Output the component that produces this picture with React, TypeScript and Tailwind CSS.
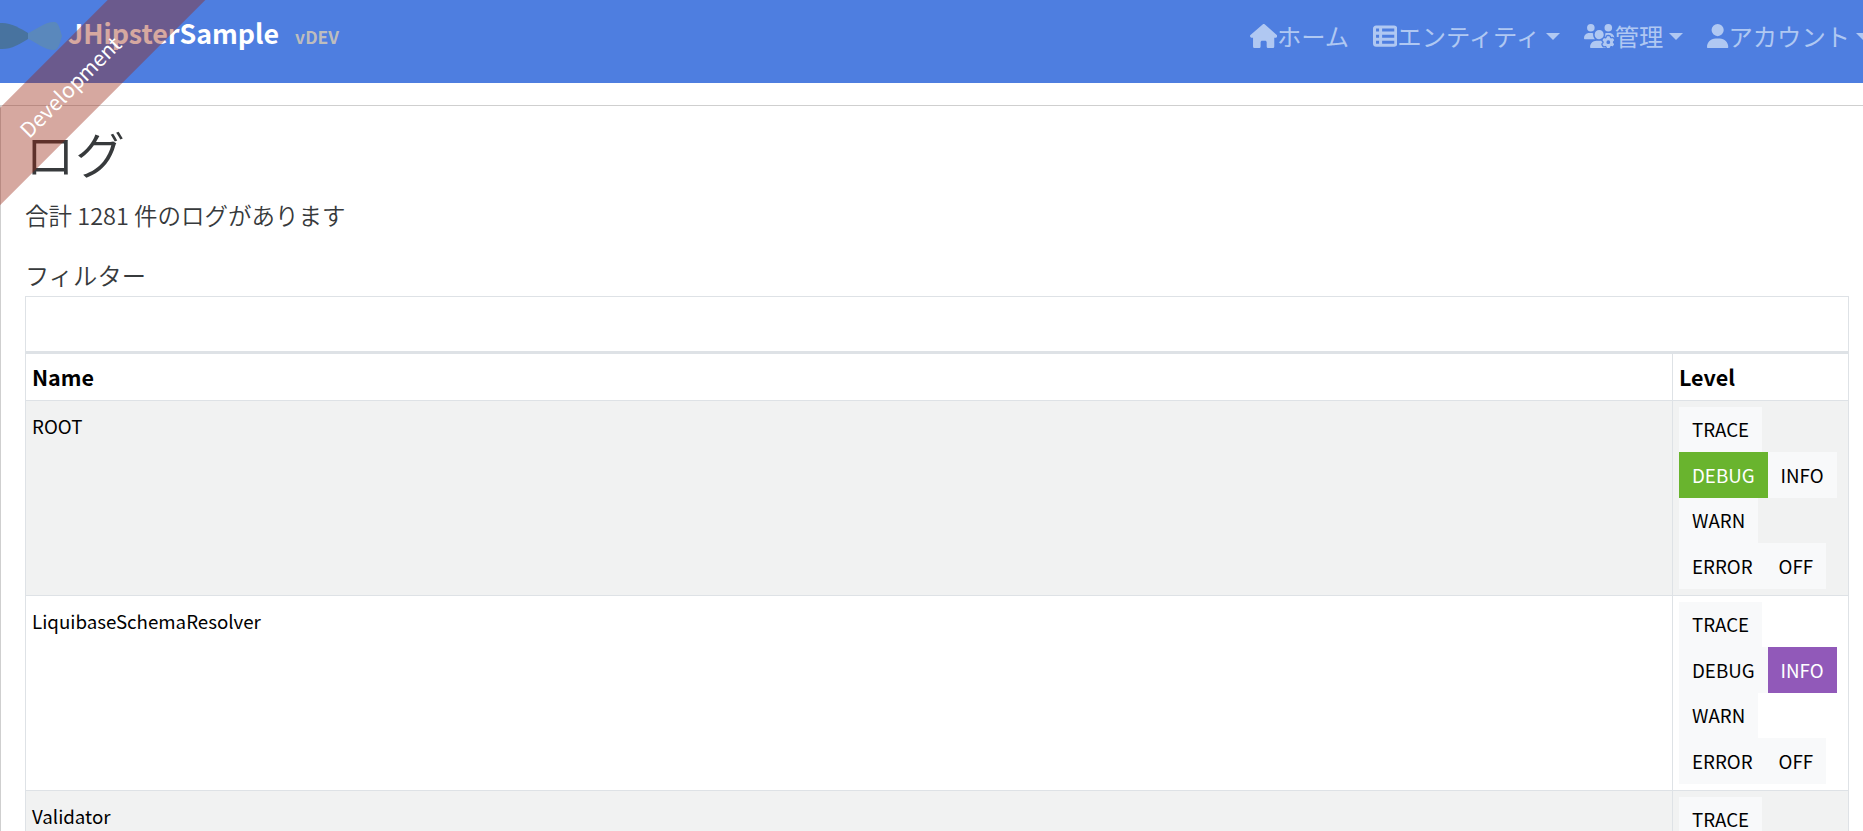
import React from 'react';
import { FaHouse, FaTableList, FaUsersGear, FaUser } from 'react-icons/fa6';

const LEVELS = ['TRACE', 'DEBUG', 'INFO', 'WARN', 'ERROR', 'OFF'];

const loggers = [
  { name: 'ROOT', level: 'DEBUG' },
  { name: 'LiquibaseSchemaResolver', level: 'INFO' },
  { name: 'Validator', level: 'INFO' },
];

const Caret = () => (
  <span className="ml-[6px] inline-block h-0 w-0 border-x-[7px] border-t-[7px] border-x-transparent border-t-current" />
);

const NavItem: React.FC<{ icon: React.ReactNode; label: string; caret?: boolean }> = ({ icon, label, caret }) => (
  <div className="flex shrink-0 items-center whitespace-nowrap">
    {icon}
    <span>{label}</span>
    {caret && <Caret />}
  </div>
);

const LevelButton: React.FC<{ level: string; active: boolean }> = ({ level, active }) => {
  let color = 'bg-[#f8f9fa] text-black';
  if (active && level === 'DEBUG') color = 'bg-[#69b42e] text-white';
  if (active && level === 'INFO') color = 'bg-[#9159b9] text-white';
  return <div className={`flex h-[45.5px] items-center px-[13px] text-[18.72px] ${color}`}>{level}</div>;
};

const App: React.FC = () => {
  return (
    <div className="relative h-screen overflow-hidden bg-white font-['Noto_Sans_CJK_JP','Noto_Sans',sans-serif]">
      {/* Development ribbon */}
      <div className="pointer-events-none absolute left-[-130px] top-[51.5px] z-50 flex h-[69px] w-[400px] -rotate-45 items-center justify-center bg-[rgba(152,37,17,0.4)] text-[21px] text-white">
        Development
      </div>

      <nav className="flex h-[83px] items-center overflow-hidden bg-[#4e7ee0]">
        <svg viewBox="0 0 62 28" className="mb-[11px] h-[28px] w-[62px] shrink-0">
          <path d="M0 1 C10 0 20 6 28 11 L28 17 C20 22 10 28 0 27 Z" fill="#48739f" />
          <path d="M28 11 C36 8 44 0 54 0 C59 0 60 8 62 14 C60 20 59 28 54 28 C44 28 36 20 28 17 Z" fill="#5a88bc" />
        </svg>
        <span className="mb-[16px] ml-[6px] shrink-0 text-[26.8px] font-bold leading-none text-white">JHipsterSample</span>
        <span className="mb-[9px] ml-[16px] shrink-0 text-[17.4px] font-bold leading-none text-[#bdbdbd]">vDEV</span>
        <div className="mb-[11px] ml-auto mr-[-7px] flex shrink-0 items-center gap-6 text-[24.3px] text-[#b0c8f2]">
          <NavItem icon={<FaHouse className="h-[24.3px] w-[27.3px]" />} label="ホーム" />
          <NavItem icon={<FaTableList className="h-[24.3px] w-[24.3px]" />} label="エンティティ" caret />
          <NavItem icon={<FaUsersGear className="h-[24.3px] w-[30.4px]" />} label="管理" caret />
          <NavItem icon={<FaUser className="h-[24.3px] w-[21.3px]" />} label="アカウント" caret />
        </div>
      </nav>

      <main className="mt-[22px] min-h-full border-l border-t border-[#cfcfcf] pl-[24px] pr-[14px] text-[#373a3c]">
        <h2 className="pt-[16px] text-[50px] font-[350] leading-[60px]">ログ</h2>
        <p className="mt-[16px] text-[23.5px] font-[350] leading-[35px]">合計 1281 件のログがあります</p>
        <p className="mt-[24px] pb-[4px] text-[24.3px] font-[350] leading-[35px]">フィルター</p>
        <div className="h-[56px] border border-[#dee2e6]" />
        <table className="w-full table-fixed border-collapse text-[18.72px] text-black">
          <colgroup>
            <col />
            <col className="w-[176px]" />
          </colgroup>
          <thead>
            <tr className="h-[47px] border-t-2 border-[#dee2e6] text-[21.5px]">
              <th className="border border-t-2 border-[#dee2e6] px-[6px] text-left font-bold">Name</th>
              <th className="border border-t-2 border-[#dee2e6] px-[6px] text-left font-bold">Level</th>
            </tr>
          </thead>
          <tbody>
            {loggers.map((logger, i) => (
              <tr key={logger.name} className={i % 2 === 0 ? 'bg-[#f1f2f2]' : 'bg-white'}>
                <td className="border border-[#dee2e6] px-[6px] pt-[11px] align-top leading-[28px]">{logger.name}</td>
                <td className="border border-[#dee2e6] py-[6px] pl-[6px] pr-[10px] align-top">
                  <div className="flex flex-wrap">
                    {LEVELS.map((level) => (
                      <LevelButton key={level} level={level} active={level === logger.level} />
                    ))}
                  </div>
                </td>
              </tr>
            ))}
          </tbody>
        </table>
      </main>
    </div>
  );
};

export default App;
